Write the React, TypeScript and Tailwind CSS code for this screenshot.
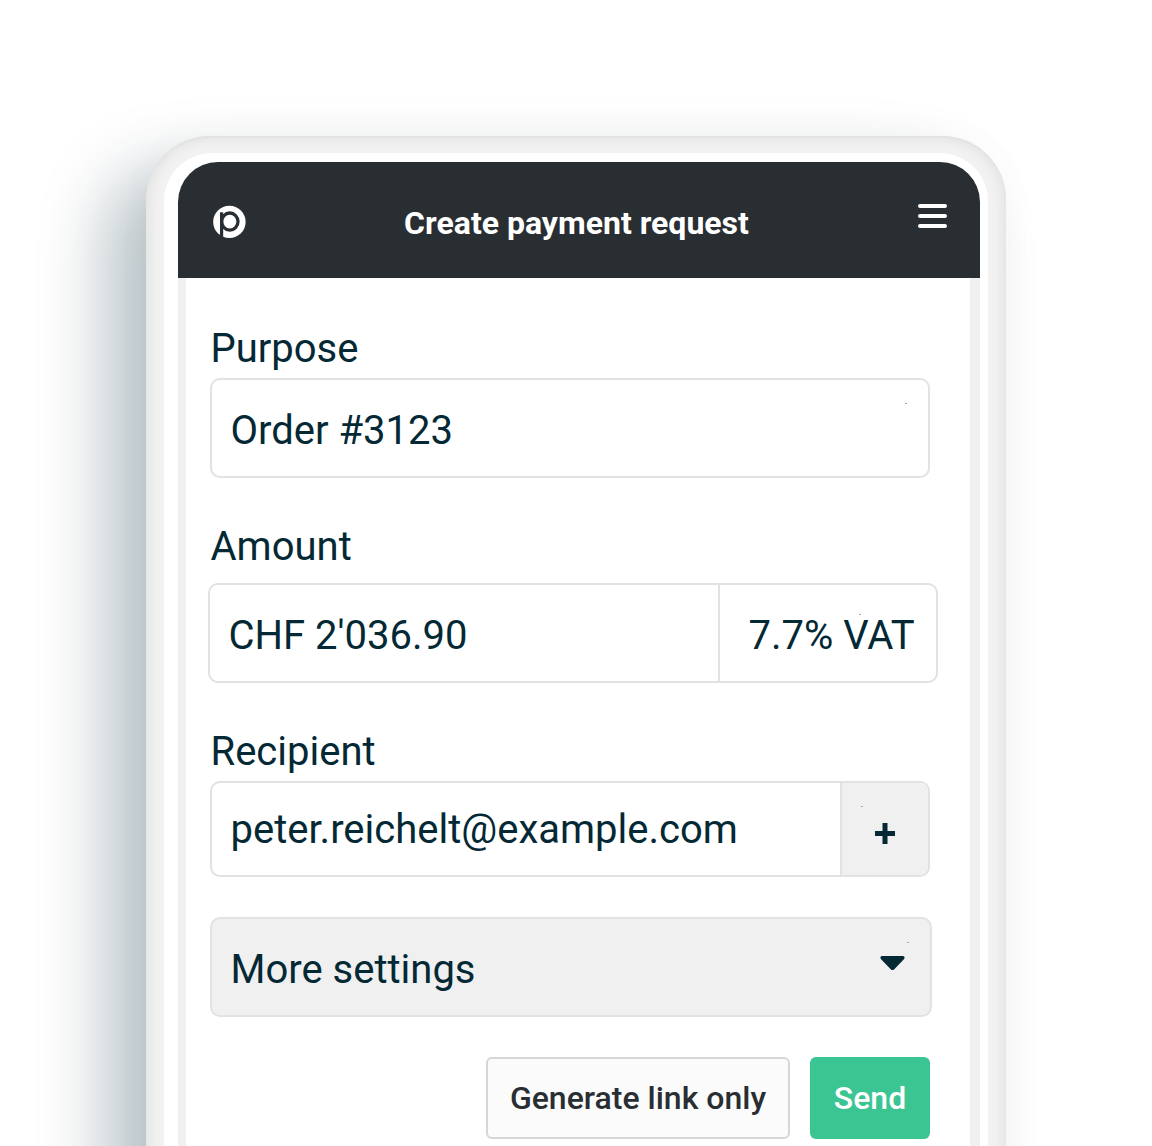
import React, { FC, ReactNode } from "react";

interface LabelProps {
  children: ReactNode;
  className?: string;
}

const Label: FC<LabelProps> = ({ children, className }: LabelProps) => {
  return (
    <div
      className={`h-12 pl-[0.5px] pt-px text-[40px] leading-[48px] ${className ?? ""}`}
    >
      {children}
    </div>
  );
};

// small grey mark in the corner of each control
const Speck: FC<{ className: string }> = ({ className }) => (
  <span className={`absolute w-0.5 h-px bg-[#a8a8a8] ${className}`} />
);

const Logo: FC = () => (
  <svg width="34" height="34" viewBox="0 0 34 34" className="shrink-0">
    <circle cx="17.4" cy="16.9" r="16.2" fill="#fff" />
    <path d="M8 7.3H11.2V34H8Z" fill="#292e32" />
    <ellipse
      cx="17.8"
      cy="16.6"
      rx="8.2"
      ry="8.6"
      fill="none"
      stroke="#292e32"
      strokeWidth="3.3"
    />
  </svg>
);

const Header: FC = () => {
  return (
    <div className="flex h-[116px] items-center justify-between rounded-t-[40px] bg-[#292e32] pl-[34px] pr-[33px] text-white">
      <div className="mt-1">
        <Logo />
      </div>
      <div className="mr-[11px] mt-1.5 text-[32px] font-bold leading-10 whitespace-nowrap">
        Create payment request
      </div>
      <div className="mb-2 flex w-[29px] flex-col gap-1.5">
        <span className="h-1 rounded-sm bg-white" />
        <span className="h-1 rounded-sm bg-white" />
        <span className="h-1 rounded-sm bg-white" />
      </div>
    </div>
  );
};

const App: FC = () => {
  return (
    <div className="h-[1146px] w-[1152px] overflow-hidden bg-white pl-[146px] pt-[136px] font-[Roboto,sans-serif] text-[#042935]">
      <div className="h-[1100px] w-[860px] rounded-t-[64px] bg-[#f2f2f2] px-[18px] pt-[17px] shadow-[-40px_34px_68px_rgba(5,41,53,0.28),0_0_50px_rgba(5,41,53,0.02),inset_0_2px_1px_#e2e4e4,inset_0_0_16px_rgba(0,0,0,0.1)]">
        <div className="h-full rounded-t-[48px] bg-white pl-3.5 pr-2 pt-[9px]">
          <Header />
          <div className="h-full border-l-8 border-r-10 border-[#f0f0f0] pl-6 pt-[46px]">
            <Label>Purpose</Label>
            <div className="relative mt-1.5 flex h-[100px] w-[720px] items-center rounded-[10px] border-2 border-[#e2e2e2] pl-[18.5px] pt-1.5 text-[40px]">
              Order #3123
              <Speck className="right-[21px] top-[23px]" />
            </div>

            <Label className="mt-11">Amount</Label>
            <div className="-ml-0.5 mt-[13px] flex h-[100px] w-[730px] rounded-[10px] border-2 border-[#e2e2e2] text-[40px]">
              <div className="flex w-[508px] items-center pl-[18.5px] pt-1.5">
                CHF 2'036.90
              </div>
              <div className="relative flex flex-1 items-center border-l-2 border-[#e2e2e2] pl-[28.5px] pt-1.5 whitespace-nowrap">
                7.7% VAT
                <Speck className="left-[139px] top-[29px]" />
              </div>
            </div>

            <Label className="mt-11">Recipient</Label>
            <div className="mt-1.5 flex h-24 w-[720px] overflow-hidden rounded-[10px] border-2 border-[#e2e2e2] text-[40px]">
              <div className="flex w-[628px] items-center pl-[18.5px] pt-0.5">
                peter.reichelt@example.com
              </div>
              <div className="relative flex flex-1 items-center justify-center border-l-2 border-[#e2e2e2] bg-[#f0f0f0]">
                <svg
                  width="20"
                  height="21"
                  viewBox="0 0 20 21"
                  className="mr-px mt-2"
                >
                  <path
                    d="M7.5 0H12.5V8H20V13H12.5V21H7.5V13H0V8H7.5Z"
                    fill="#042935"
                  />
                </svg>
                <Speck className="left-[19px] top-[23px]" />
              </div>
            </div>

            <div className="relative mt-10 flex h-[100px] w-[722px] items-center justify-between rounded-[10px] border-2 border-[#e2e2e2] bg-[#f0f0f0] pl-[18.5px] pr-[25px] text-[40px]">
              <span className="mt-1.5">More settings</span>
              <svg width="25" height="16" viewBox="0 0 25 16" className="mb-2">
                <path
                  d="M2 1H23C24.6 1 25.1 3 23.9 4.2L14.3 14.2Q12.5 16 10.7 14.2L1.1 4.2C-.1 3 .4 1 2 1Z"
                  fill="#042935"
                />
              </svg>
              <Speck className="right-[21px] top-[23px]" />
            </div>

            <div className="mt-10 flex w-[720px] justify-end gap-5 text-[32px] font-medium">
              <button className="h-[82px] w-[304px] rounded-md border-2 border-[#d6d6d6] bg-[#fbfbfb] text-[#292e32] whitespace-nowrap">
                Generate link only
              </button>
              <button className="h-[82px] w-[120px] rounded-md bg-[#3ac592] text-white">
                Send
              </button>
            </div>
          </div>
        </div>
      </div>
    </div>
  );
};

export default App;
